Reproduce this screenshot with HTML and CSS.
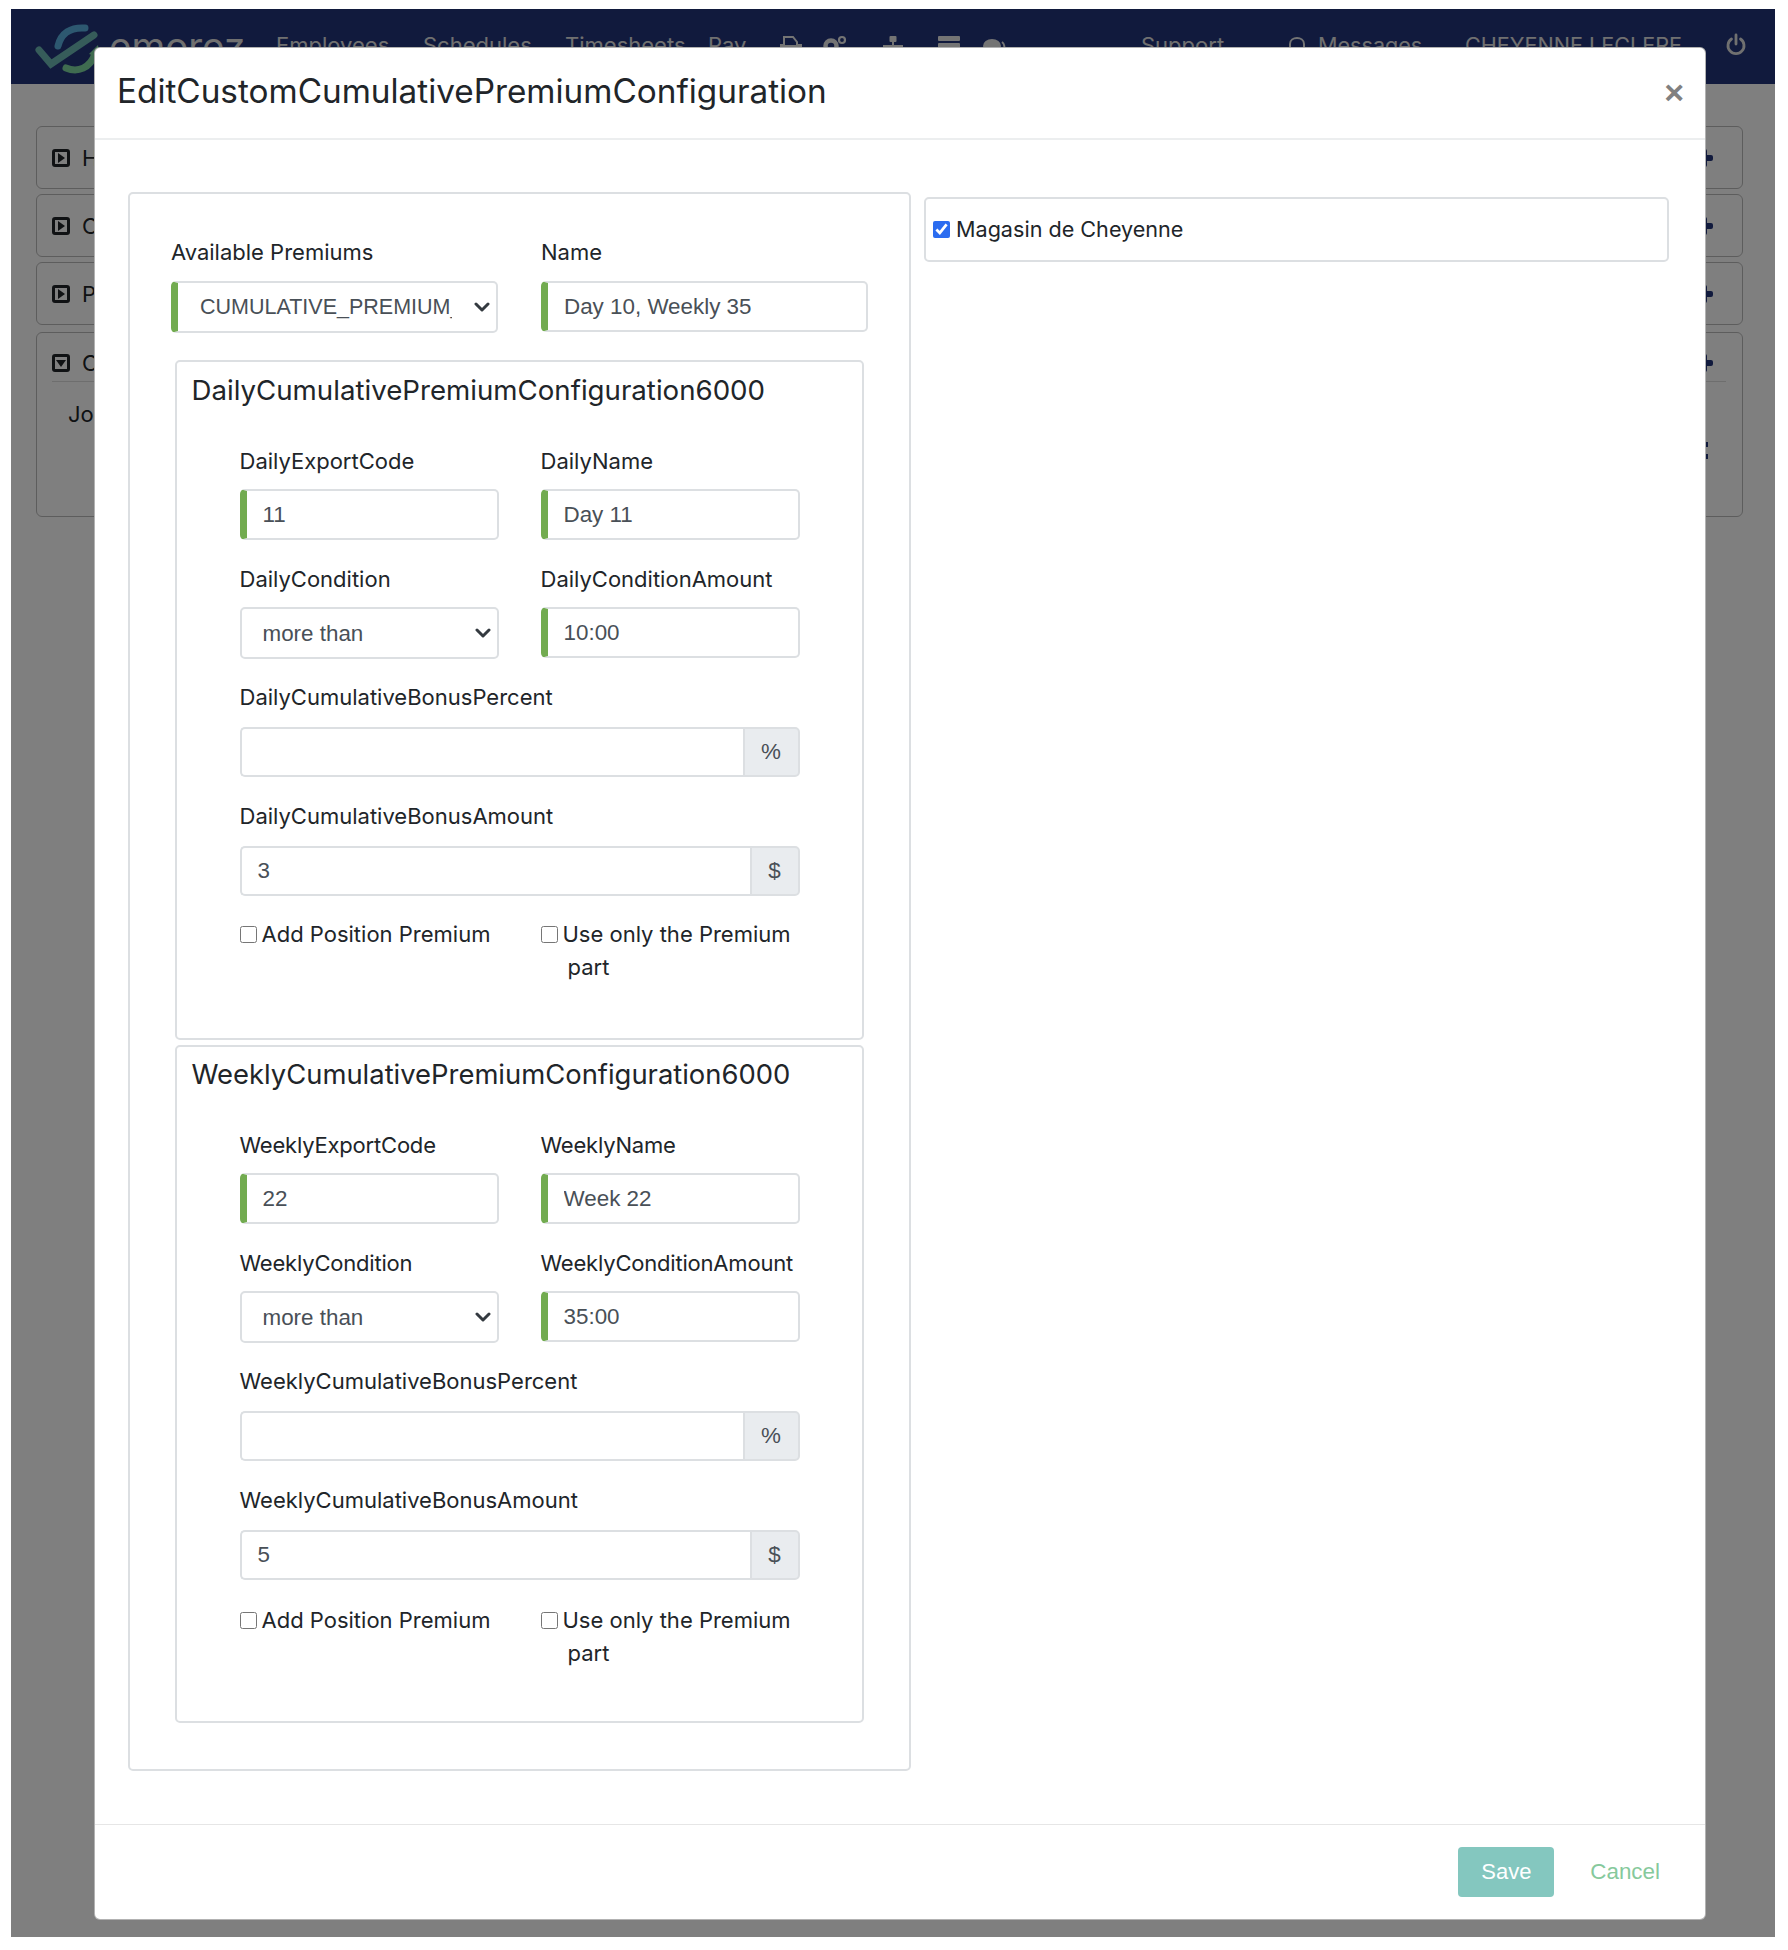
FILE: index.html
```html
<!DOCTYPE html>
<html lang="en">
<head>
<meta charset="utf-8">
<title>EditCustomCumulativePremiumConfiguration</title>
<link rel="stylesheet" href="styles.css">
</head>
<body>
<div class="page">
  <nav class="navbar">
    <svg class="logo" viewBox="0 0 70 56" aria-hidden="true">
      <path class="logo-blue" d="M24 24C27 11 37 5 51 6"/>
      <path class="logo-green" d="M32 46C44 51 56 46 61 32"/>
      <path class="logo-arrow" d="M64 23L66 36L55 32Z"/>
      <path class="logo-check" d="M5 28L17 42L60 13"/>
    </svg>
    <span class="brand">emorez</span>
    <span class="nav-link nav-employees">Employees</span>
    <span class="nav-link nav-schedules">Schedules</span>
    <span class="nav-link nav-timesheets">Timesheets</span>
    <span class="nav-link nav-pay">Pay</span>
    <svg class="nav-icon nav-printer" viewBox="0 0 22 22" aria-hidden="true"><path d="M4 1h9l4 5v3h4v8H1V9h3z" fill="none" stroke="currentColor" stroke-width="2"/><rect x="1" y="9" width="20" height="8" fill="currentColor"/></svg>
    <svg class="nav-icon nav-gears" viewBox="0 0 24 22" aria-hidden="true"><circle cx="8" cy="10" r="5.500" fill="none" stroke="currentColor" stroke-width="4.500"/><circle cx="19" cy="4" r="3" fill="none" stroke="currentColor" stroke-width="2.200"/></svg>
    <svg class="nav-icon nav-sitemap" viewBox="0 0 20 22" aria-hidden="true"><rect x="6.500" y="0" width="7" height="6" rx="1" fill="currentColor"/><path d="M10 6v4M1 20V10h18v10" fill="none" stroke="currentColor" stroke-width="2"/></svg>
    <svg class="nav-icon nav-server" viewBox="0 0 22 22" aria-hidden="true"><rect y="0" width="22" height="5" rx="1" fill="currentColor"/><rect y="7" width="22" height="5" rx="1" fill="currentColor"/></svg>
    <svg class="nav-icon nav-comments" viewBox="0 0 22 22" aria-hidden="true"><ellipse cx="9" cy="9" rx="9" ry="7" fill="currentColor"/><path d="M19 5c3 2 3 6 1 9" fill="none" stroke="currentColor" stroke-width="2"/></svg>
    <span class="nav-link nav-support">Support</span>
    <svg class="nav-icon nav-bell" viewBox="0 0 20 22" aria-hidden="true"><path d="M3 15V8c0-8 14-8 14 0v7" fill="none" stroke="currentColor" stroke-width="2"/></svg>
    <span class="nav-link nav-messages">Messages</span>
    <span class="nav-link nav-user">CHEYENNE LECLERE</span>
    <svg class="nav-power" viewBox="0 0 20 22" aria-hidden="true"><path d="M5.500 5a8 8 0 1 0 9 0M10 1v9" fill="none" stroke="currentColor" stroke-width="2.800" stroke-linecap="round"/></svg>
  </nav>

  <main class="behind">
    <section class="panel">
      <div class="panel-head"><span class="square"><i class="tri-right"></i></span><span class="panel-title">H</span><span class="plus"></span></div>
    </section>
    <section class="panel">
      <div class="panel-head"><span class="square"><i class="tri-right"></i></span><span class="panel-title">C</span><span class="plus"></span></div>
    </section>
    <section class="panel">
      <div class="panel-head"><span class="square"><i class="tri-right"></i></span><span class="panel-title">P</span><span class="plus"></span></div>
    </section>
    <section class="panel panel-open">
      <div class="panel-head panel-head-open"><span class="square"><i class="tri-down"></i></span><span class="panel-title">C</span><span class="plus"></span></div>
      <div class="panel-body"><span class="panel-row">Jo</span><span class="dots"></span></div>
    </section>
  </main>

  <div class="backdrop"></div>

  <div class="modal">
    <header class="modal-header">
      <h1 class="modal-title">EditCustomCumulativePremiumConfiguration</h1>
      <span class="close">×</span>
    </header>
    <div class="modal-body">
      <div class="main-card">
        <div class="top-row">
          <div class="field">
            <label class="lbl">Available Premiums</label>
            <select class="ctl req"><option>CUMULATIVE_PREMIUM_CONFIGURATION</option></select>
          </div>
          <div class="field">
            <label class="lbl">Name</label>
            <input class="ctl req" type="text" value="Day 10, Weekly 35">
          </div>
        </div>

        <section class="group">
          <h2 class="group-title">DailyCumulativePremiumConfiguration6000</h2>
          <div class="row">
            <div class="field"><label class="lbl">DailyExportCode</label><input class="ctl req" type="text" value="11"></div>
            <div class="field"><label class="lbl">DailyName</label><input class="ctl req" type="text" value="Day 11"></div>
          </div>
          <div class="row">
            <div class="field"><label class="lbl">DailyCondition</label><select class="ctl"><option>more than</option></select></div>
            <div class="field"><label class="lbl">DailyConditionAmount</label><input class="ctl req" type="text" value="10:00"></div>
          </div>
          <div class="wide">
            <label class="lbl lbl-group">DailyCumulativeBonusPercent</label>
            <div class="input-group"><input class="group-input" type="text" value=""><span class="addon addon-pct">%</span></div>
          </div>
          <div class="wide">
            <label class="lbl lbl-group">DailyCumulativeBonusAmount</label>
            <div class="input-group"><input class="group-input" type="text" value="3"><span class="addon addon-usd">$</span></div>
          </div>
          <div class="row row-checks">
            <label class="check"><input type="checkbox">Add Position Premium</label>
            <label class="check"><input type="checkbox">Use only the Premium part</label>
          </div>
        </section>

        <section class="group group-weekly">
          <h2 class="group-title">WeeklyCumulativePremiumConfiguration6000</h2>
          <div class="row">
            <div class="field"><label class="lbl">WeeklyExportCode</label><input class="ctl req" type="text" value="22"></div>
            <div class="field"><label class="lbl">WeeklyName</label><input class="ctl req" type="text" value="Week 22"></div>
          </div>
          <div class="row">
            <div class="field"><label class="lbl">WeeklyCondition</label><select class="ctl"><option>more than</option></select></div>
            <div class="field"><label class="lbl">WeeklyConditionAmount</label><input class="ctl req" type="text" value="35:00"></div>
          </div>
          <div class="wide">
            <label class="lbl lbl-group">WeeklyCumulativeBonusPercent</label>
            <div class="input-group"><input class="group-input" type="text" value=""><span class="addon addon-pct">%</span></div>
          </div>
          <div class="wide">
            <label class="lbl lbl-group">WeeklyCumulativeBonusAmount</label>
            <div class="input-group"><input class="group-input" type="text" value="5"><span class="addon addon-usd">$</span></div>
          </div>
          <div class="row row-checks">
            <label class="check"><input type="checkbox">Add Position Premium</label>
            <label class="check"><input type="checkbox">Use only the Premium part</label>
          </div>
        </section>
      </div>

      <div class="side-card">
        <label class="side-check"><input type="checkbox" checked>Magasin de Cheyenne</label>
      </div>
    </div>
    <footer class="modal-footer">
      <button class="btn-save" type="button">Save</button>
      <button class="btn-cancel" type="button">Cancel</button>
    </footer>
  </div>
</div>
</body>
</html>
```

FILE: styles.css
```css
* { box-sizing: border-box; }
html, body { margin: 0; padding: 0; background: #fff; }
body { height: 1950px; padding: 9px 13px 13px 11px; font-family: Inter, "Liberation Sans", sans-serif; color: #212529; }

.page { position: relative; width: 1764px; height: 1928px; background: #fff; overflow: hidden; }

/* page behind the dialog */
.navbar { display: flex; align-items: center; height: 75px; background: #22347a; color: #e0e0e0; padding: 0 0 4px 23px; white-space: nowrap; }
.logo { width: 70px; height: 56px; flex: none; margin-top: 10px; }
.logo path { fill: none; stroke-width: 7; stroke-linecap: round; }
.logo .logo-blue { stroke: #5ab0e0; }
.logo .logo-green { stroke: #7ed6a0; }
.logo .logo-arrow { fill: #7ed6a0; stroke: none; }
.logo .logo-check { stroke: #6cb8b4; stroke-width: 7; }
.brand { font-size: 38.500px; line-height: 1; margin-left: 5px; width: 137px; flex: none; margin-top: 4px; }
.nav-link { font-size: 22px; flex: none; }
.nav-employees { margin-left: 30px; width: 147px; }
.nav-schedules { width: 142px; }
.nav-timesheets { width: 143px; }
.nav-pay { width: 72px; }
.nav-icon { flex: none; height: 22px; margin-top: 4px; color: #e8e8e8; overflow: visible; }
.nav-printer { width: 22px; margin-right: 21px; }
.nav-gears { width: 24px; margin-right: 36px; }
.nav-sitemap { width: 20px; margin-right: 35px; }
.nav-server { width: 22px; margin-right: 23px; }
.nav-comments { width: 22px; margin-right: 136px; margin-top: 7px; }
.nav-support { width: 146px; }
.nav-bell { width: 20px; margin-right: 11px; }
.nav-messages { font-size: 21.600px; width: 147px; }
.nav-user { font-size: 21.600px; width: 261px; }
.nav-power { width: 20px; height: 24px; flex: none; color: #e0e0e0; }

.behind { padding: 42px 32px 0 25px; display: flex; flex-direction: column; gap: 5px; }
.panel { height: 63px; border: 1px solid #bbb; border-radius: 6px; padding: 0 16px 0 15px; }
.panel-open { height: 185px; margin-top: 2px; }
.panel-head { display: flex; align-items: center; height: 61px; gap: 12px; font-size: 22px; }
.panel-head-open { height: 49px; padding-top: 12px; border-bottom: 1px solid #ddd; }
.square { width: 18px; height: 18px; border: 3px solid #212529; border-radius: 3px; display: flex; align-items: center; justify-content: center; flex: none; }
.tri-right { border-left: 7px solid #212529; border-top: 5px solid transparent; border-bottom: 5px solid transparent; }
.tri-down { border-top: 7px solid #212529; border-left: 5px solid transparent; border-right: 5px solid transparent; }
.panel-title { flex: 1; }
.plus { position: relative; width: 18px; height: 6px; background: #22347a; border-radius: 2px; margin-right: 13px; flex: none; }
.plus::before { content: ""; position: absolute; left: 6px; top: -6px; width: 6px; height: 18px; background: #22347a; border-radius: 2px; }
.panel-body { display: flex; justify-content: space-between; font-size: 22px; padding: 19px 18px 0 16px; }
.dots { width: 10px; height: 17px; margin-top: 41px; background: linear-gradient(#22347a 0 5px, transparent 5px 12px, #22347a 12px 17px); }

.backdrop { position: absolute; inset: 0; background: rgba(0, 0, 0, .5); }

/* dialog */
.modal { position: absolute; left: 83px; top: 38px; width: 1612px; height: 1873px; background: #fff; border-radius: 6px; border: 1px solid rgba(0, 0, 0, .3); display: flex; flex-direction: column; }
.modal-header { height: 92px; flex: none; display: flex; align-items: center; justify-content: space-between; padding: 0 21px 2px 22px; border-bottom: 2px solid #eceeef; }
.modal-title { margin: 0; font-size: 33.300px; font-weight: 400; color: #212529; line-height: 1.2; }
.close { font-size: 34px; font-weight: 700; line-height: 1; color: #808080; font-family: "Liberation Sans", sans-serif; }

.modal-body { flex: 1; display: grid; grid-template-columns: 783px 744px; column-gap: 13px; align-items: start; padding: 52px 0 0 33px; }
.modal-footer { height: 95px; flex: none; border-top: 1px solid #e6e6e6; display: flex; align-items: center; justify-content: flex-end; padding: 0 37px 0 0; gap: 36px; }

.main-card { height: 1579px; border: 2px solid #dcdfe2; border-radius: 5px; padding: 44px 0 0 41px; }
.top-row { display: grid; grid-template-columns: 327px 327px; column-gap: 43px; margin-bottom: 27px; }
.top-row .lbl { margin-bottom: 13px; }
.side-card { height: 65px; margin-top: 5px; margin-right: -1px; border: 2px solid #dcdfe2; border-radius: 5px; display: flex; align-items: center; padding: 0 0 2px 7px; }

.lbl { display: block; height: 30px; line-height: 28px; margin-bottom: 14px; font-size: 22px; color: #212529; white-space: nowrap; }
.lbl-group { margin-bottom: 14px; }
.ctl { display: block; width: 100%; height: 52px; font-family: "Liberation Sans", sans-serif; font-size: 22.400px; color: #495057; background: #fff; border: 2px solid #dcdfe2; border-radius: 5px; padding: 0 16px; }
input.ctl { height: 51px; margin-bottom: 1px; }
.ctl.req { border-left: 7px solid #72ab50; padding-left: 16px; }
select.ctl { appearance: none; padding: 0 44px 0 21px; text-overflow: clip; background-image: url("data:image/svg+xml,%3Csvg xmlns='http://www.w3.org/2000/svg' viewBox='0 0 16 10'%3E%3Cpath d='M2 2l6 6 6-6' fill='none' stroke='%23343a40' stroke-width='3' stroke-linecap='round' stroke-linejoin='round'/%3E%3C/svg%3E"); background-repeat: no-repeat; background-position: right 6px center; background-size: 16px 10px; }
select.ctl.req { padding-left: 22px; font-size: 21.500px; }

.group { width: 689px; height: 680px; margin-left: 4px; border: 2px solid #dcdfe2; border-radius: 5px; padding: 8px 0 0 62.500px; }
.group-weekly { margin-top: 5px; height: 678px; padding-top: 7px; }
.group-title { margin: 0 0 37px -48px; height: 40px; line-height: 40px; font-size: 27.660px; font-weight: 400; color: #212529; white-space: nowrap; }
.group-weekly .group-title { font-size: 27.400px; }
.group-weekly .row .lbl { letter-spacing: -.2px; }

.row { display: grid; grid-template-columns: 259px 259px; column-gap: 42px; margin-bottom: 24px; }
.row .lbl { margin-bottom: 12px; }
.wide { width: 560px; margin-bottom: 25px; }
.input-group { display: flex; height: 50px; }
.group-input { flex: 1; min-width: 0; height: 100%; font-family: "Liberation Sans", sans-serif; font-size: 22.400px; color: #495057; border: 2px solid #dcdfe2; border-right: 0; border-radius: 5px 0 0 5px; padding: 0 16px; background: #fff; }
.addon { display: flex; align-items: center; justify-content: center; font-family: "Liberation Sans", sans-serif; font-size: 22.400px; color: #495057; background: #e9ecef; border: 2px solid #dcdfe2; border-radius: 0 5px 5px 0; }
.addon-pct { width: 57px; }
.addon-usd { width: 50px; }

.row-checks { margin: -3px 0 0; }
.group-weekly .row-checks { margin-top: -1px; }
.check { display: block; padding-left: 27px; font-size: 22px; line-height: 33px; color: #212529; }
.check input { width: 17px; height: 17px; margin: 0 5px 0 -27px; vertical-align: -1px; }
.side-check { font-size: 21.600px; color: #212529; }
.side-check input { width: 17px; height: 17px; margin: 0 6px 0 0; vertical-align: -1px; accent-color: #2b6cf0; }

.btn-save { width: 96px; height: 50px; border: 0; border-radius: 4px; background: #84c7bf; color: #fff; font-family: "Liberation Sans", sans-serif; font-size: 22px; padding: 0; }
.btn-cancel { border: 0; background: none; color: #86c99c; font-family: "Liberation Sans", sans-serif; font-size: 22.400px; padding: 0 8px 0 0; }
```
